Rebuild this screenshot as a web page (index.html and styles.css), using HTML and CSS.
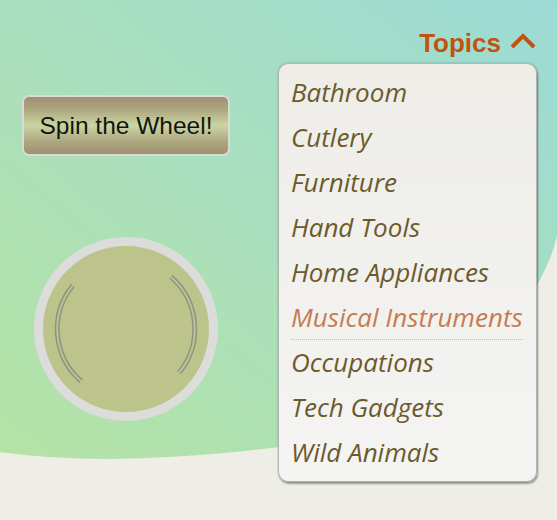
FILE: index.html
```html
<!DOCTYPE html>
<html>
<head>
<meta charset="utf-8">
<link rel="stylesheet" href="styles.css">
</head>
<body>
<div class="page">
  <div class="left">
    <button class="spin">Spin the Wheel!</button>
    <div class="wheel">
      <svg class="arcs" width="166" height="166" viewBox="0 0 166 166">
        <g fill="none" stroke="#8f9384" stroke-width="1.5">
          <path d="M28.60,38.15 A70.5,70.5 0 0 0 37.22,136.61"/>
          <path d="M31.30,40.38 A67,67 0 0 0 39.49,133.95"/>
          <path d="M128.78,29.39 A70.5,70.5 0 0 1 137.40,127.85"/>
          <path d="M126.51,32.05 A67,67 0 0 1 134.70,125.62"/>
        </g>
      </svg>
    </div>
  </div>
  <div class="right">
    <div class="topics">
      <span class="topics-label">Topics</span>
      <svg class="caret" width="26" height="16" viewBox="0 0 26 16">
        <path d="M2,14 L13,3 L24,14" fill="none" stroke="#c2530f" stroke-width="4"/>
      </svg>
    </div>
    <ul class="menu">
      <li class="item">Bathroom</li>
      <li class="item">Cutlery</li>
      <li class="item">Furniture</li>
      <li class="item">Hand Tools</li>
      <li class="item">Home Appliances</li>
      <li class="item item-active">Musical Instruments</li>
      <li class="item">Occupations</li>
      <li class="item">Tech Gadgets</li>
      <li class="item">Wild Animals</li>
    </ul>
  </div>
</div>
</body>
</html>
```
FILE: styles.css
```css
html, body {
  margin: 0;
  padding: 0;
}
body {
  width: 557px;
  height: 520px;
  overflow: hidden;
  background-color: #eeeee7;
  background-image: url("data:image/svg+xml,%3Csvg xmlns='http://www.w3.org/2000/svg' width='557' height='520'%3E%3Cdefs%3E%3ClinearGradient id='g' x1='1' y1='0' x2='0' y2='1'%3E%3Cstop offset='0' stop-color='%239cdbd5'/%3E%3Cstop offset='1' stop-color='%23b5e3a5'/%3E%3C/linearGradient%3E%3C/defs%3E%3Cpath d='M0,0H557V235C540,320 420,430 280,447Q110,468 0,452Z' fill='url(%23g)'/%3E%3C/svg%3E");
  background-repeat: no-repeat;
  font-family: "Liberation Sans", Arial, sans-serif;
}
.page {
  display: flex;
  justify-content: space-between;
  height: 520px;
}
.left {
  display: flex;
  flex-direction: column;
  align-items: flex-start;
  padding-left: 22px;
  padding-top: 95px;
}
.spin {
  box-sizing: border-box;
  width: 208px;
  height: 61px;
  border: 2px solid #dadad6;
  border-radius: 7px;
  background: linear-gradient(to bottom, #9d9170 0%, #aea680 22%, #c9d6a2 50%, #aea680 78%, #9d9170 100%);
  font-family: "Liberation Sans", Arial, sans-serif;
  font-size: 24.5px;
  color: #141410;
  padding: 0;
  margin: 0;
}
.wheel {
  box-sizing: border-box;
  width: 184px;
  height: 184px;
  margin-top: 81px;
  margin-left: 12px;
  border: 9px solid #dcdcda;
  border-radius: 50%;
  background: #bdc48b;
}
.arcs {
  display: block;
}
.right {
  width: 259px;
  margin-right: 20px;
  padding-top: 28px;
}
.topics {
  display: flex;
  justify-content: flex-end;
  align-items: center;
  height: 30px;
  padding-right: 1px;
  gap: 9px;
}
.topics-label {
  font-family: "Liberation Sans", Arial, sans-serif;
  font-weight: bold;
  font-size: 26px;
  line-height: 30px;
  color: #c2530f;
}
.caret {
  display: block;
  margin-top: -4px;
}
.menu {
  box-sizing: border-box;
  list-style: none;
  margin: 5px 0 0 0;
  padding: 6px 10px 6px 12px;
  height: 419px;
  border: 1px solid rgba(60, 70, 60, 0.35);
  border-radius: 10px;
  background: linear-gradient(to bottom, #eeede8, #f4f4f3);
  box-shadow: 1px 2px 2px rgba(0, 0, 0, 0.35), 0 0 2px rgba(0, 0, 0, 0.25);
}
.item {
  font-family: "Open Sans", sans-serif;
  font-style: italic;
  font-size: 26px;
  line-height: 45px;
  height: 45px;
  color: #6d5a2c;
  white-space: nowrap;
}
.item-active {
  color: #c77b52;
  border-bottom: 1px dotted #c2c0b8;
  height: 44px;
  margin-right: 3px;
}
```
